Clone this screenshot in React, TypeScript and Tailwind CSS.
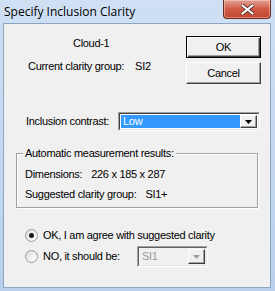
import React from "react";

const body = { fontFamily: '"Liberation Sans", Arial, sans-serif' };

function Radio({ checked }: { checked?: boolean }) {
  return (
    <span className="flex h-[13px] w-[13px] items-center justify-center rounded-full border border-[#9a9a9a] bg-gradient-to-br from-[#dcdcdc] to-white">
      {checked && <span className="h-[5px] w-[5px] rounded-full bg-[#1a1a1a]" />}
    </span>
  );
}

function Arrow({ color }: { color: string }) {
  return (
    <svg width="7" height="4" viewBox="0 0 7 4">
      <path d="M0 0h7L3.5 4z" fill={color} />
    </svg>
  );
}

function DropButton({ disabled }: { disabled?: boolean }) {
  return (
    <span className="flex w-[17px] items-center justify-center border border-t-white border-l-white border-b-[#404040] border-r-[#404040] bg-[#f0f0f0] shadow-[inset_-1px_-1px_0_#a0a0a0]">
      <Arrow color={disabled ? "#a0a0a0" : "#000"} />
    </span>
  );
}

export default function App() {
  return (
    <div className="flex h-[291px] w-[275px] flex-col bg-gradient-to-b from-[#cfe0f4] to-[#b9d0ec]" style={body}>
      {/* title bar */}
      <div className="relative flex h-[23px] items-start">
        <span
          className="pl-[4px] pt-[4px] text-[12px] leading-[15px] text-black"
          style={{ fontFamily: '"Open Sans", "Noto Sans", sans-serif' }}
        >
          Specify Inclusion Clarity
        </span>
        <div className="absolute right-[4px] top-0 flex h-[19px] w-[48px] items-center justify-center rounded-b-[4px] border border-t-0 border-[#6e2a22] bg-gradient-to-b from-[#e2a394] via-[#cf5a45] to-[#c0452f] shadow-[inset_0_0_0_1px_rgba(255,220,210,0.45)]">
          <svg width="13" height="11" viewBox="0 0 13 11">
            <path d="M1.5 1.5l10 8M11.5 1.5l-10 8" stroke="#4a2a26" strokeWidth="3.6" strokeLinecap="square" />
            <path d="M1.5 1.5l10 8M11.5 1.5l-10 8" stroke="#fff" strokeWidth="2" strokeLinecap="square" />
          </svg>
        </div>
      </div>

      {/* client area */}
      <div className="mb-[3px] ml-[3px] mr-[4px] flex flex-1 flex-col border border-[#8da5c3] bg-[#f0f0f0] text-[11px] leading-[13px] tracking-[-0.3px] text-black">
        <div className="flex">
          <div className="flex w-[182px] flex-col pt-[13px]">
            <span className="pl-[69px]">Cloud-1</span>
            <span className="mt-[10px] pl-[24px]">
              Current clarity group:<span className="pl-[11px]">SI2</span>
            </span>
          </div>
          <div className="flex flex-col gap-[4px] pt-[12px]">
            <button className="flex h-[22px] w-[75px] items-center justify-center border border-[#000] bg-[#f0f0f0] shadow-[inset_1px_1px_0_#fff,inset_-1px_-1px_0_#404040,inset_-2px_-2px_0_#a0a0a0]">
              OK
            </button>
            <button className="flex h-[22px] w-[75px] items-center justify-center border border-t-white border-l-white border-b-[#404040] border-r-[#404040] bg-[#f0f0f0] shadow-[inset_-1px_-1px_0_#a0a0a0]">
              Cancel
            </button>
          </div>
        </div>

        <div className="mt-[28px] flex items-center">
          <span className="w-[114px] pl-[22px]">Inclusion contrast:</span>
          <div className="flex h-[19px] w-[142px] border border-t-[#a0a0a0] border-l-[#a0a0a0] border-b-white border-r-white bg-white">
            <div className="flex flex-1 border border-t-[#404040] border-l-[#404040] border-b-[#e3e3e3] border-r-[#e3e3e3] p-[1px]">
              <span className="flex flex-1 items-center bg-[#3399ff] pl-[2px] text-white">Low</span>
              <DropButton />
            </div>
          </div>
        </div>

        <div className="relative mx-[12px] mt-[22px] flex h-[55px] flex-col border border-[#a0a0a0] pl-[8px] pt-[14px] shadow-[1px_1px_0_#fff,inset_1px_1px_0_#fff]">
          <span className="absolute left-[6px] top-[-7px] bg-[#f0f0f0] px-[2px]">Automatic measurement results:</span>
          <span>
            Dimensions:<span className="pl-[9px]">226 x 185 x 287</span>
          </span>
          <span className="mt-[7px]">
            Suggested clarity group:<span className="pl-[9px]">SI1+</span>
          </span>
        </div>

        <div className="mt-[21px] flex items-center pl-[21px]">
          <Radio checked />
          <span className="pl-[5px]">OK, I am agree with suggested clarity</span>
        </div>
        <div className="mt-[4px] flex items-center pl-[21px]">
          <Radio />
          <span className="w-[99px] pl-[5px]">NO, it should be:</span>
          <div className="flex h-[21px] w-[71px] border border-t-[#a0a0a0] border-l-[#a0a0a0] border-b-white border-r-white">
            <div className="flex flex-1 border border-t-[#606060] border-l-[#606060] border-b-[#e3e3e3] border-r-[#e3e3e3] p-[1px]">
              <span className="flex flex-1 items-center pl-[2px] text-[#9a9a9a]">SI1</span>
              <DropButton disabled />
            </div>
          </div>
        </div>
      </div>
    </div>
  );
}
